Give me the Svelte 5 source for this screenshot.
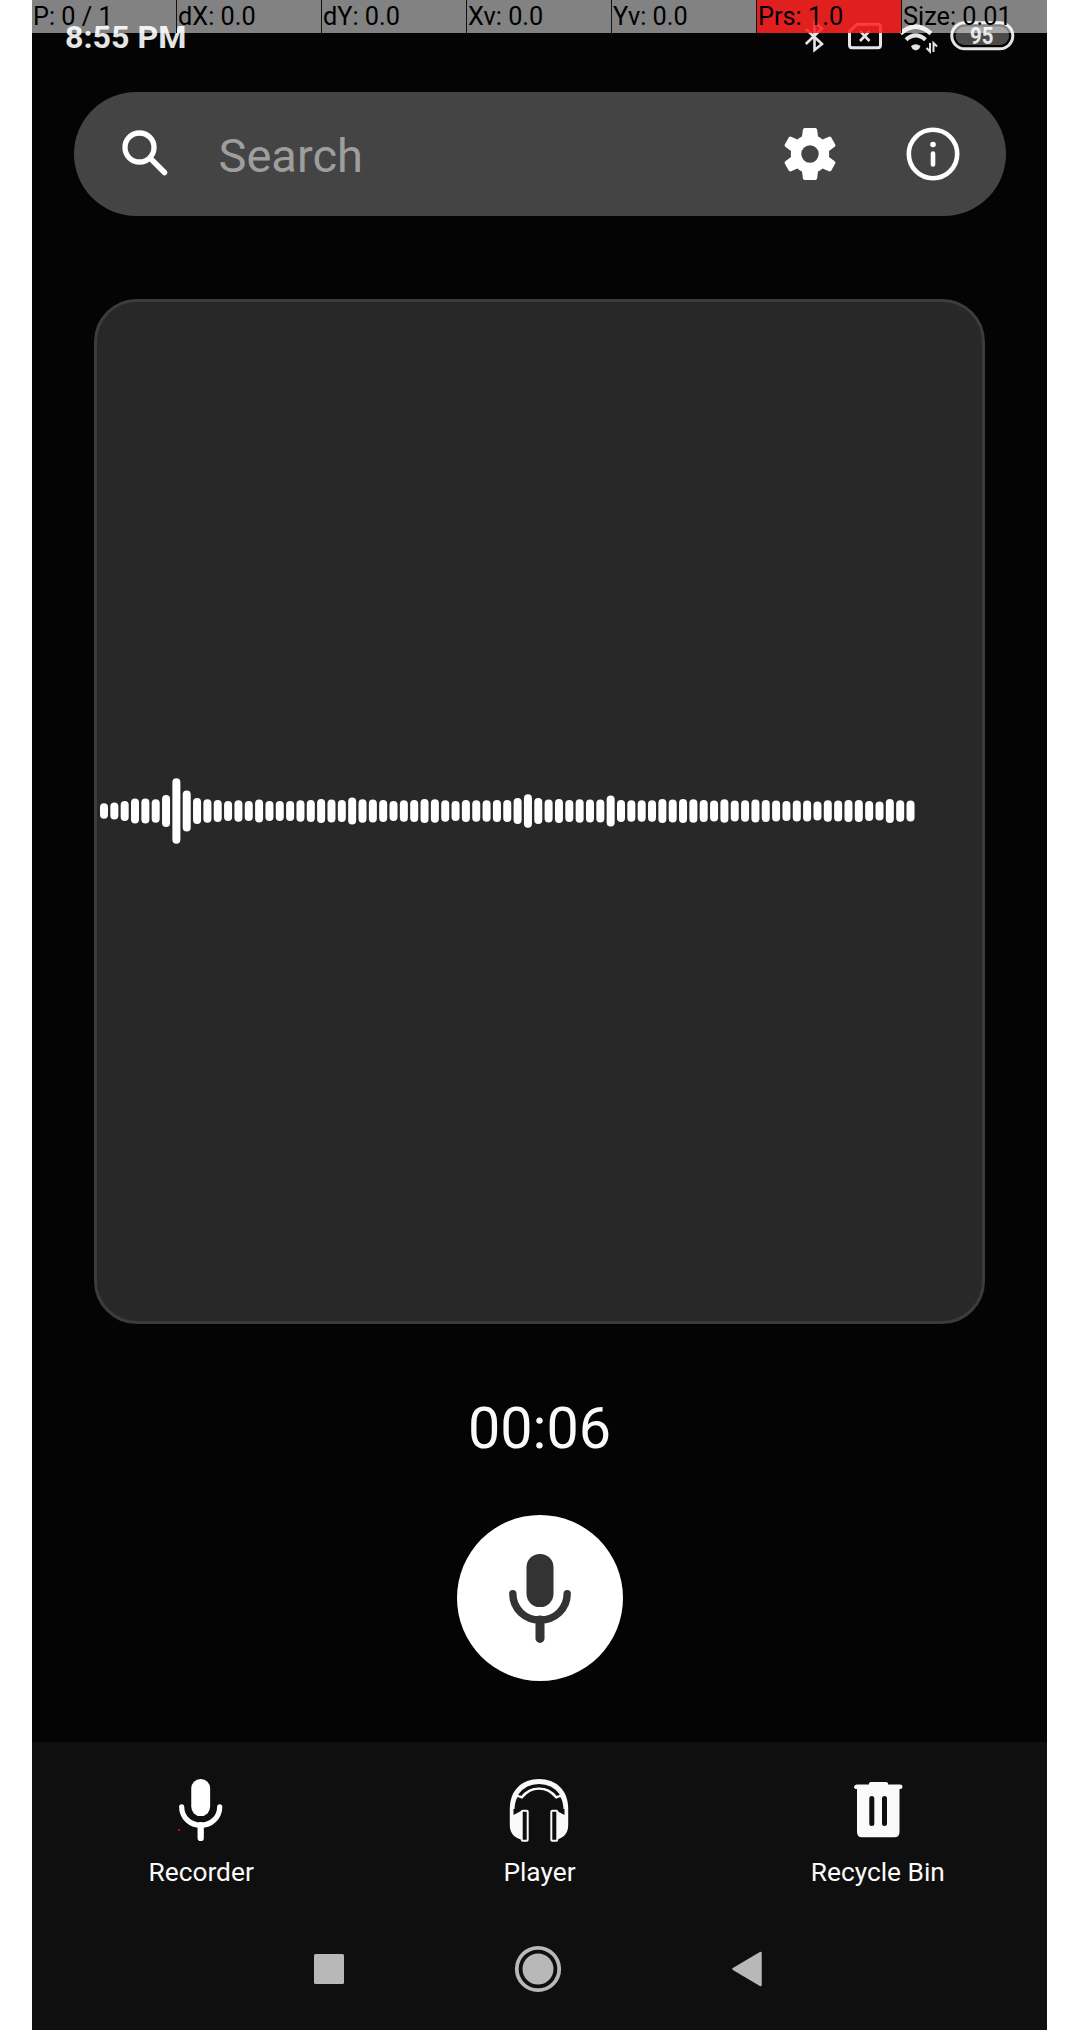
<script>
  const metrics = ['P: 0 / 1', 'dX: 0.0', 'dY: 0.0', 'Xv: 0.0', 'Yv: 0.0', 'Prs: 1.0', 'Size: 0.01'];

  // Height of each waveform bar, in pixels.
  const levels = [
    15.5, 17, 20, 25, 25, 23.5, 32, 65.5, 41, 26, 23.5, 22, 20, 21.5, 20, 23, 20, 20, 20, 21.5,
    22, 24, 23, 22, 27, 23.5, 23, 22, 20, 21.5, 22, 24, 23.5, 21.5, 20, 22, 21.5, 21.5, 22, 22,
    26, 33.5, 26, 23, 24, 22, 23.5, 23, 23, 31, 22, 21.5, 21.5, 21.5, 24, 23, 24, 23.5, 22, 21,
    23.5, 21, 21.5, 23, 22, 21, 20, 21, 21, 19, 21.5, 21, 22, 22, 20, 19, 24, 21.5, 21
  ];
  const pitch = 10.34;
</script>

{#snippet mic()}
  <svg class="mic" viewBox="0 0 62 89" aria-hidden="true">
    <rect x="17.5" y="0" width="27" height="53" rx="13.2" fill="currentColor" />
    <path d="M3.8 39.6C3.8 55 16 66 31 66S58.2 55 58.2 39.6" fill="none" stroke="currentColor" stroke-width="7.4" stroke-linecap="round" />
    <path d="M31 66V84.4" fill="none" stroke="currentColor" stroke-width="9" stroke-linecap="round" />
  </svg>
{/snippet}

<main class="phone">
  <div class="status">
    <span class="clock">8:55 PM</span>
    <svg class="status-icons" viewBox="0 0 214 36" aria-hidden="true">
      <g fill="none" stroke="#e5e5e5" stroke-width="2.6">
        <path d="M1.800 11L18 26L10.500 32V4L18 10.500L1.800 26" />
        <path d="M53 6.200H74Q76.500 6.200 76.500 9V27Q76.500 29.700 74 29.700H48Q45.500 29.700 45.500 27V13.500Z" stroke-width="3" />
        <path d="M56 13L65.500 23M65.500 13L56 23" />
        <path d="M96.500 15.500Q111.700 1.800 127 15.500" stroke-width="4.400" />
        <path d="M102 21.800Q111.700 13 121.500 21.800" stroke-width="4.200" />
        <path d="M126 25V33.500L122.500 30M129.500 34V25L133 28.500" stroke-width="2" />
        <rect x="147.800" y="4.800" width="61" height="26" rx="13" stroke-width="3" />
      </g>
      <path d="M107 28Q111.700 24.500 116.500 28L115 31L111.700 32.500L108.500 31Z" fill="#e5e5e5" />
      <rect x="151.500" y="8.500" width="53.500" height="18.500" rx="9" fill="#4b4b4b" />
      <text x="166" y="26.300" textLength="23.500" lengthAdjust="spacingAndGlyphs" class="charge">95</text>
    </svg>
    <div class="overlay">
      {#each metrics as metric}
        <span class:hot={metric.startsWith('Prs')}>{metric}</span>
      {/each}
    </div>
  </div>

  <header class="search">
    <svg class="lens" viewBox="0 0 46 46" aria-hidden="true">
      <g fill="none" stroke="#fff" stroke-linecap="round">
        <circle cx="17.500" cy="17.500" r="14.500" stroke-width="5.300" />
        <path d="M30 30L42.500 42.500" stroke-width="5.500" />
        <path d="M27.500 27.500L31 31" stroke-width="4" />
      </g>
    </svg>
    <span class="hint">Search</span>
    <svg class="gear" viewBox="0 0 52 54" aria-hidden="true">
      <path fill="#fff" fill-rule="evenodd" d="M20.500 1H31.500L33 2L34 9.500Q36.500 10.500 38.500 12.500L45.500 9.500L47 10L51.500 18L51 19.500L45 24Q45.300 27 45 30L51 34.500L51.500 36L47 44L45.500 44.500L38.500 41.500Q36.500 43.500 34 44.500L33 52L31.500 53H20.500L19 52L18 44.500Q15.500 43.500 13.500 41.500L6.500 44.500L5 44L.5 36L1 34.500L7 30Q6.700 27 7 24L1 19.500L.5 18L5 10L6.500 9.500L13.500 12.500Q15.500 10.500 18 9.500L19 2ZM26 18.300A8.700 8.700 0 1 0 26 35.700A8.700 8.700 0 1 0 26 18.300Z" />
    </svg>
    <svg class="info" viewBox="0 0 54 54" aria-hidden="true">
      <circle cx="27" cy="27" r="24.200" fill="none" stroke="#fff" stroke-width="4.600" />
      <circle cx="27" cy="17.500" r="2.800" fill="#fff" />
      <path d="M27 26.500V37.500" stroke="#fff" stroke-width="4.600" stroke-linecap="round" />
    </svg>
  </header>

  <section class="wave">
    <svg width="820" height="70" viewBox="0 0 820 70" fill="#fff" aria-hidden="true">
      {#each levels as level, i}
        <rect x={i * pitch} y={35 - level / 2} width="8" height={level} rx="4" />
      {/each}
    </svg>
  </section>

  <div class="timer">00:06</div>
  <button class="record" aria-label="Record">{@render mic()}</button>

  <footer>
    <nav class="tabs">
      <div class="tab">
        <div class="pic recorder">{@render mic()}<b class="dot"></b></div>
        <span>Recorder</span>
      </div>
      <div class="tab">
        <div class="pic">
          <svg width="60" height="64" viewBox="0 0 60 64" aria-hidden="true">
            <path fill="#fafafa" d="M.8 31C.8 12 13 1 30 1S59.200 12 59.200 31V47C59.200 56 54 59.500 48 61.500H12C6 59.500.8 56 .8 47Z" />
            <path fill="#0f0f0f" d="M4.500 31H5.500C5.800 25 7 21.500 8.700 19L12.500 20.500Q20 11 30 11T47.500 20.500L51.300 19C53 21.500 54.200 25 54.500 31H55.500V37L48 33V64H12V33L4.500 37Z" />
            <path fill="none" stroke="#0f0f0f" stroke-width="3.400" d="M10.500 17.500Q18 7.800 30 7.800T49.500 17.500" />
            <path fill="none" stroke="#fafafa" stroke-width="2" d="M10.500 18L13 19.500Q20 10.700 30 10.700T47 19.500L49.500 18" />
            <rect x="12.700" y="32.700" width="6" height="30" rx="1" fill="#0f0f0f" stroke="#fafafa" stroke-width="2" />
            <rect x="42.300" y="32.700" width="6" height="30" rx="1" fill="#0f0f0f" stroke="#fafafa" stroke-width="2" />
          </svg>
        </div>
        <span>Player</span>
      </div>
      <div class="tab">
        <div class="pic">
          <svg width="50" height="64" viewBox="0 0 50 64" aria-hidden="true">
            <path fill="#fafafa" d="M16 5Q17 4 18 4H33Q34 4 35 5V6.500H47Q49.500 6.500 49.500 9T46.500 11V54Q46.500 59.300 41.500 59.300H9Q4 59.300 4 54V11Q1 11 1 9T3.500 6.500H16Z" />
            <path stroke="#0f0f0f" stroke-width="5" stroke-linecap="round" d="M18.800 20.500V45.500M31.500 20.500V45.500" />
          </svg>
        </div>
        <span>Recycle Bin</span>
      </div>
    </nav>
    <div class="system">
      <svg width="30" height="30" viewBox="0 0 30 30" aria-hidden="true"><rect width="30" height="30" rx="1.500" fill="#b8b8b8" /></svg>
      <svg width="48" height="48" viewBox="0 0 48 48" aria-hidden="true">
        <circle cx="24" cy="24" r="15.500" fill="#b8b8b8" />
        <circle cx="24" cy="24" r="21.200" fill="none" stroke="#b8b8b8" stroke-width="3.800" />
      </svg>
      <svg width="30" height="36" viewBox="0 0 30 36" aria-hidden="true">
        <path d="M1.500 18L28.500 2V34Z" fill="#b8b8b8" stroke="#b8b8b8" stroke-width="2.500" stroke-linejoin="round" />
      </svg>
    </div>
  </footer>
</main>

<style>
  :global(body) {
    background: #fff;
  }

  .phone {
    display: flex;
    flex-direction: column;
    align-items: center;
    box-sizing: border-box;
    width: 1015px;
    height: 2030px;
    margin-left: 32px;
    overflow: hidden;
    background: #040404;
    color: #fafafa;
    font-family: Roboto, sans-serif;
  }

  .phone svg {
    display: block;
    flex: none;
  }

  .status {
    position: relative;
    display: flex;
    flex: none;
    justify-content: space-between;
    box-sizing: border-box;
    width: 100%;
    height: 92px;
    padding: 18px 29px 0 33px;
  }

  .clock {
    color: #e5e5e5;
    font-size: 32.2px;
    font-weight: 700;
    line-height: 39px;
    white-space: nowrap;
  }

  .status-icons {
    width: 214px;
    height: 36px;
  }

  .charge {
    fill: #e5e5e5;
    font-size: 23px;
    font-weight: 700;
  }

  /* Translucent pointer readout lying over the status bar. */
  .overlay {
    position: absolute;
    inset: 0 0 auto;
    display: grid;
    grid-template-columns: repeat(7, 1fr);
    height: 33px;
    color: #000;
    font-size: 25.3px;
    line-height: 34px;
  }

  .overlay span {
    box-sizing: border-box;
    height: 33px;
    padding-left: 1px;
    border-right: 1px solid #111;
    background: rgba(255, 255, 255, 0.505);
    background-clip: padding-box;
    white-space: nowrap;
  }

  .overlay span:last-child {
    border-right: 0;
  }

  .overlay .hot {
    background-color: rgba(255, 35, 35, 0.88);
  }

  .search {
    display: flex;
    flex: none;
    align-items: center;
    box-sizing: border-box;
    width: 932px;
    height: 124px;
    padding: 0 46px 0 48px;
    border-radius: 62px;
    background: #444;
  }

  .lens {
    width: 46px;
    height: 46px;
    margin-bottom: 2px;
  }

  .hint {
    flex: 1;
    margin-left: 51px;
    color: #9e9e9e;
    font-size: 47px;
    line-height: 56px;
    padding-top: 4px;
  }

  .gear {
    width: 52px;
    height: 54px;
    margin-right: 70px;
  }

  .info {
    width: 54px;
    height: 54px;
  }

  .wave {
    display: flex;
    flex: none;
    align-items: center;
    box-sizing: border-box;
    width: 891px;
    height: 1025px;
    margin-top: 83px;
    padding: 0 0 1px 3.3px;
    border: 3px solid #3c3c3c;
    border-radius: 43px;
    background: #282828;
  }

  .timer {
    flex: none;
    margin-top: 71px;
    font-size: 57.5px;
    line-height: 68px;
  }

  .record {
    display: flex;
    flex: none;
    align-items: center;
    justify-content: center;
    width: 166px;
    height: 166px;
    margin-top: 52px;
    padding: 0;
    border: 0;
    border-radius: 50%;
    background: #fff;
    color: #333;
  }

  .mic {
    width: 62px;
    height: 89px;
  }

  footer {
    width: 100%;
    flex: 1;
    margin-top: 61px;
    background: #0f0f0f;
  }

  .tabs {
    display: grid;
    grid-template-columns: repeat(3, 1fr);
    height: 197px;
    padding-top: 36px;
    box-sizing: border-box;
  }

  .tab {
    display: flex;
    flex-direction: column;
    align-items: center;
    gap: 15px;
    font-size: 26.3px;
    line-height: 30px;
  }

  .pic {
    position: relative;
    height: 64px;
  }

  .recorder {
    color: #fff;
  }

  .recorder .mic {
    width: 43.4px;
    height: 62.3px;
    margin-top: 1px;
  }

  .dot {
    position: absolute;
    left: -1px;
    top: 51px;
    width: 2px;
    height: 2px;
    background: #d00;
  }

  .system {
    display: flex;
    align-items: center;
    justify-content: space-between;
    width: 448px;
    height: 60px;
    margin-left: 282px;
  }
</style>
